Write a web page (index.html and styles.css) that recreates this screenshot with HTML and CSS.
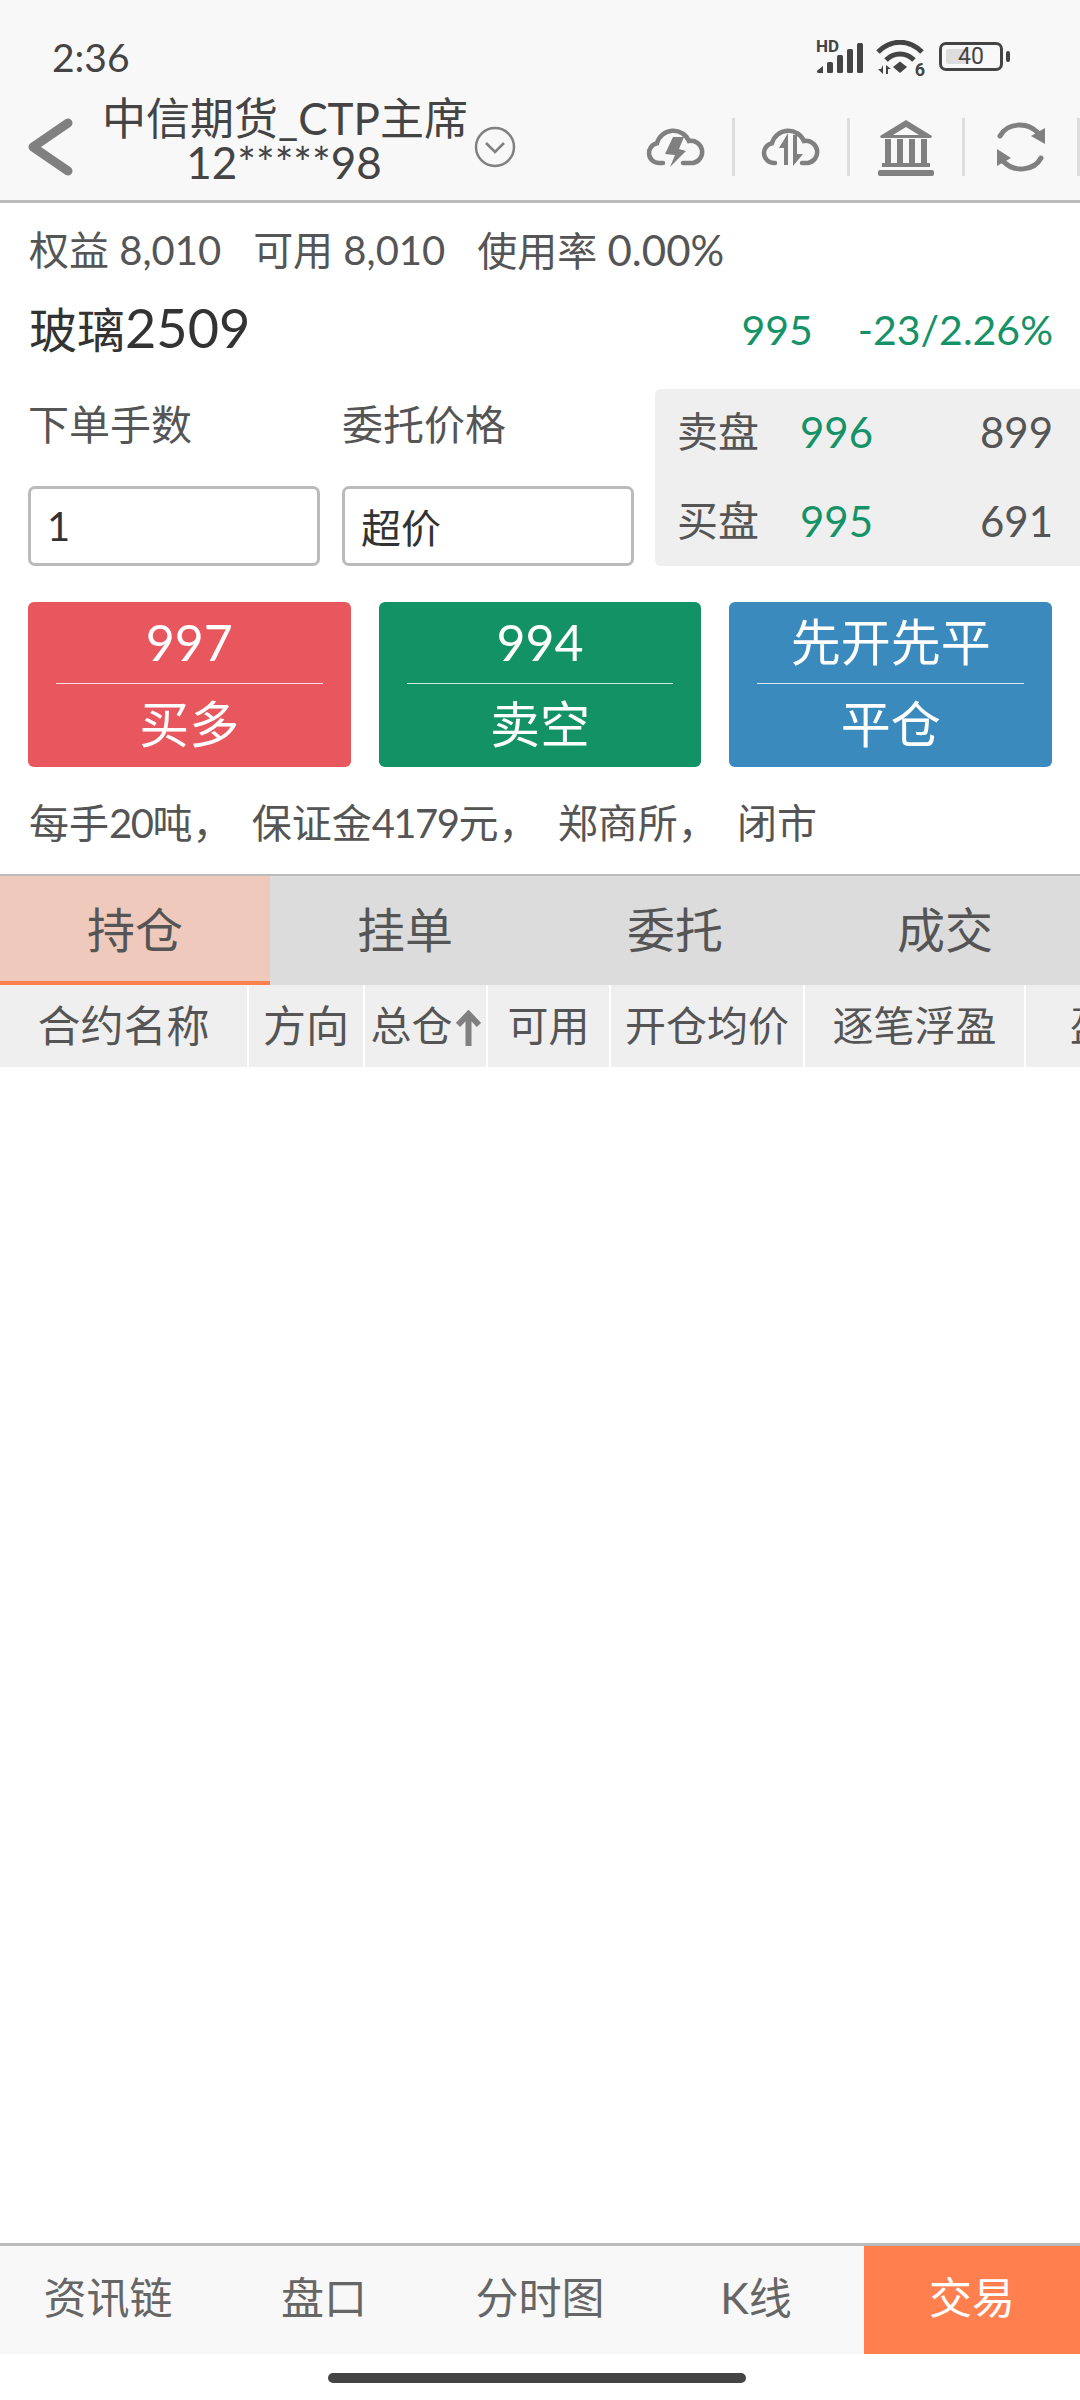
FILE: index.html
```html
<!DOCTYPE html>
<html>
<head>
    <title>交易</title>
    <link rel="stylesheet" href="styles.css">
</head>
<body>
    <div class="top-bar">
        <div class="status-bar">
            <span class="clock">2:36</span>
            <div class="status-icons">
                <!-- signal bars -->
                <div class="signal">
                    <span class="hd">HD</span>
                    <svg width="49" height="32" viewBox="0 0 49 32">
                        <path d="M3 31a1.500 1.500 0 0 1-1-3l5-4v7z" fill="#444"/>
                        <rect x="11" y="20" width="6" height="11" rx="1.500" fill="#444"/>
                        <rect x="21" y="13" width="6" height="18" rx="1.500" fill="#444"/>
                        <rect x="31" y="7" width="6" height="24" rx="1.500" fill="#444"/>
                        <rect x="41" y="1" width="6" height="30" rx="1.500" fill="#444"/>
                    </svg>
                </div>
                <!-- wifi -->
                <div class="wifi">
                    <svg width="49" height="36" viewBox="0 0 49 36">
                        <path d="M2 12C15-1 33-1 46 12" fill="none" stroke="#444" stroke-width="5"/>
                        <path d="M10 20C18 12 30 12 38 20" fill="none" stroke="#444" stroke-width="5"/>
                        <path d="M17 27L24 21.500 31 27 24 33z" fill="#444"/>
                        <path d="M7 25v9L2 29h3zM10 25v9h2v-5h3z" fill="#444"/>
                    </svg>
                    <span class="wifi-six">6</span>
                </div>
                <div class="battery">
                    <div class="battery-body">
                        <div class="battery-level"></div>
                        <span class="battery-num">40</span>
                    </div>
                    <div class="battery-cap"></div>
                </div>
            </div>
        </div>
        <div class="nav-bar">
            <svg class="back" width="46" height="58" viewBox="0 0 46 58">
                <path d="M41 5L6 29l35 24" fill="none" stroke="#808080" stroke-width="9" stroke-linecap="round" stroke-linejoin="round"/>
            </svg>
            <div class="account">
                <div>中信期货_CTP主席</div>
                <div>12*****98</div>
            </div>
            <svg class="account-more" width="42" height="42" viewBox="0 0 42 42">
                <circle cx="21" cy="21" r="19" fill="none" stroke="#808080" stroke-width="2.500"/>
                <path d="M12 17l9 9 9-9" fill="none" stroke="#808080" stroke-width="2.500"/>
            </svg>
            <div class="nav-tools">
                <div class="tool">
                    <svg width="60" height="48" viewBox="0 0 60 48">
                        <path d="M17 40H13a10 10 0 0 1-2-19.800A17 17 0 0 1 43 18a11 11 0 0 1 4 22H37" fill="none" stroke="#808080" stroke-width="4.500" stroke-linecap="round"/>
                        <path d="M27 14h11l-5 12 7 2-16 16 5-12-10-1z" fill="#808080"/>
                    </svg>
                </div>
                <div class="tool">
                    <svg width="60" height="48" viewBox="0 0 60 48">
                        <path d="M14 40H13a10 10 0 0 1-2-19.800A17 17 0 0 1 43 18a11 11 0 0 1 4 22H41" fill="none" stroke="#808080" stroke-width="4.500" stroke-linecap="round"/>
                        <path d="M27 10v32h-4V25h-5z" fill="#808080"/>
                        <path d="M32 12h4v19h6l-10 12z" fill="#808080"/>
                    </svg>
                </div>
                <div class="tool">
                    <svg width="56" height="58" viewBox="0 0 56 58">
                        <path d="M28 2L2 18l1 2h50l1-2zM28 9l-13 8h26z" fill="#808080" fill-rule="evenodd"/>
                        <rect x="7" y="21" width="6" height="25" fill="#808080"/>
                        <rect x="19" y="21" width="6" height="25" fill="#808080"/>
                        <rect x="31" y="21" width="6" height="25" fill="#808080"/>
                        <rect x="43" y="21" width="6" height="25" fill="#808080"/>
                        <rect x="4" y="45" width="48" height="4" fill="#808080"/>
                        <rect x="0" y="52" width="56" height="6" rx="2" fill="#808080"/>
                    </svg>
                </div>
                <div class="tool">
                    <svg width="52" height="52" viewBox="0 0 52 52">
                        <path d="M5 15C12 2 32 0 43 12" fill="none" stroke="#808080" stroke-width="5" stroke-linecap="round"/>
                        <path d="M36 15l14-8v16z" fill="#808080"/>
                        <path d="M46 37C39 50 19 52 8 40" fill="none" stroke="#808080" stroke-width="5" stroke-linecap="round"/>
                        <path d="M16 37L2 45V28z" fill="#808080"/>
                    </svg>
                </div>
            </div>
        </div>
    </div>

    <div class="summary">
        <span>权益 8,010</span>
        <span>可用 8,010</span>
        <span>使用率 <span class="rate">0.00%</span></span>
    </div>

    <div class="contract">
        <span class="contract-name">玻璃<span class="contract-code">2509</span></span>
        <div class="contract-quote">
            <span>995</span>
            <span>-23/2.26%</span>
        </div>
    </div>

    <div class="order">
        <div class="order-fields">
            <div class="field">
                <label for="lots">下单手数</label>
                <input id="lots" type="text" value="1">
            </div>
            <div class="field">
                <label for="price">委托价格</label>
                <input id="price" type="text" value="超价">
            </div>
        </div>
        <div class="depth">
            <div class="depth-row"><span>卖盘</span><span class="depth-price">996</span><span class="depth-qty">899</span></div>
            <div class="depth-row"><span>买盘</span><span class="depth-price">995</span><span class="depth-qty">691</span></div>
        </div>
    </div>

    <div class="actions">
        <div class="action buy"><div class="action-top">997</div><div class="action-bottom">买多</div></div>
        <div class="action sell"><div class="action-top">994</div><div class="action-bottom">卖空</div></div>
        <div class="action close"><div class="action-top">先开先平</div><div class="action-bottom">平仓</div></div>
    </div>

    <p class="note">每手<span class="note-num">20</span>吨， 保证金<span class="note-num">4179</span>元， 郑商所， 闭市</p>

    <div class="tabs">
        <div class="tab active">持仓</div>
        <div class="tab">挂单</div>
        <div class="tab">委托</div>
        <div class="tab">成交</div>
    </div>

    <div class="table-head">
        <div class="col col-name">合约名称</div>
        <div class="col col-side">方向</div>
        <div class="col col-total">总仓<svg class="sort" width="25" height="37" viewBox="0 0 25 37"><path d="M12.500 4V36M2 15L12.500 4 23 15" fill="none" stroke="#808080" stroke-width="6"/></svg></div>
        <div class="col col-free">可用</div>
        <div class="col col-avg">开仓均价</div>
        <div class="col col-float">逐笔浮盈</div>
        <div class="col col-more">盈亏</div>
    </div>

    <div class="positions"></div>

    <div class="bottom-nav">
        <div class="bottom-item">资讯链</div>
        <div class="bottom-item">盘口</div>
        <div class="bottom-item">分时图</div>
        <div class="bottom-item">K线</div>
        <div class="bottom-item selected">交易</div>
    </div>

    <div class="home-area"><div class="home-pill"></div></div>
</body>
</html>
```

FILE: styles.css
```css
* {
    box-sizing: border-box;
}
html, body {
    height: 100%;
}
body {
    margin: 0;
    height: 2400px;
    width: 1080px;
    overflow: hidden;
    display: flex;
    flex-direction: column;
    background-color: #ffffff;
    color: #555555;
    font-family: "Lato", "Noto Sans CJK SC", sans-serif;
}

/* top bar */
.top-bar {
    height: 203px;
    background-color: #f8f8f8;
    border-bottom: 3px solid #bbbbbb;
    flex-shrink: 0;
}
.status-bar {
    height: 94px;
    padding: 32px 70px 0 52px;
    display: flex;
    justify-content: space-between;
    align-items: flex-start;
}
.clock {
    font-size: 39px;
    line-height: 50px;
    color: #444444;
}
.status-icons {
    display: flex;
    gap: 11px;
    align-items: flex-start;
    margin-top: 8px;
}
.signal {
    position: relative;
    width: 49px;
    height: 34px;
    padding-top: 2px;
}
.hd {
    position: absolute;
    left: 0;
    top: -2px;
    font-family: "Roboto", sans-serif;
    font-size: 17px;
    font-weight: 700;
    line-height: 16px;
    color: #444444;
}
.wifi {
    position: relative;
    width: 49px;
    height: 36px;
}
.wifi-six {
    position: absolute;
    right: 0;
    bottom: -2px;
    font-family: "Roboto", sans-serif;
    font-size: 18px;
    font-weight: 700;
    line-height: 17px;
    color: #444444;
}
.battery {
    display: flex;
    align-items: center;
    gap: 3px;
    margin-left: 3px;
    margin-top: 2px;
}
.battery-body {
    position: relative;
    width: 64px;
    height: 29px;
    border: 3px solid #444444;
    border-radius: 7px;
    display: flex;
    align-items: center;
    justify-content: center;
}
.battery-level {
    position: absolute;
    left: 4px;
    top: 4px;
    bottom: 4px;
    width: 20px;
    background-color: #dddddd;
    border-radius: 2px;
}
.battery-num {
    position: relative;
    font-family: "Roboto", sans-serif;
    font-size: 23px;
    line-height: 24px;
    color: #444444;
}
.battery-cap {
    width: 4px;
    height: 11px;
    background-color: #444444;
    border-radius: 2px;
}
.nav-bar {
    height: 106px;
    display: flex;
    align-items: center;
    padding-left: 27px;
}
.back {
    flex-shrink: 0;
}
.account {
    width: 364px;
    margin-left: 29px;
    margin-top: -14px;
    text-align: center;
    font-size: 44px;
    line-height: 44px;
    color: #444444;
    white-space: nowrap;
}
.account-more {
    margin-left: 8px;
}
.nav-tools {
    margin-left: auto;
    display: flex;
}
.tool {
    width: 115px;
    height: 58px;
    border-right: 3px solid #dddddd;
    display: flex;
    align-items: center;
    justify-content: center;
}

/* account summary */
.summary {
    display: flex;
    gap: 32px;
    padding: 0 29px;
    margin-top: 22px;
    height: 50px;
    font-size: 40px;
    line-height: 50px;
    white-space: nowrap;
}
.rate {
    font-size: 42px;
}
.contract {
    display: flex;
    justify-content: space-between;
    align-items: center;
    padding: 0 27px 0 29px;
    margin-top: 24px;
    height: 60px;
}
.contract-name {
    font-size: 48px;
    color: #333333;
    margin-top: -5px;
}
.contract-code {
    font-size: 54px;
}
.contract-quote {
    display: flex;
    gap: 45px;
    font-size: 41px;
    color: #169267;
}

/* order form and depth */
.order {
    display: flex;
    justify-content: space-between;
    margin-top: 30px;
    padding-left: 28px;
}
.order-fields {
    display: flex;
    gap: 22px;
}
.field {
    width: 292px;
    display: flex;
    flex-direction: column;
}
.field label {
    font-size: 41px;
    line-height: 50px;
    height: 86px;
    margin-top: 11px;
}
.field input {
    width: 292px;
    height: 80px;
    border: 3px solid #bbbbbb;
    border-radius: 7px;
    padding: 0 16px;
    font-family: inherit;
    font-size: 40px;
    color: #333333;
    background-color: #ffffff;
}
.depth {
    width: 425px;
    height: 177px;
    background-color: #efefef;
    border-radius: 6px 0 0 6px;
    padding: 0 27px 3px 22px;
    display: flex;
    flex-direction: column;
    justify-content: center;
    gap: 39px;
}
.depth-row {
    display: flex;
    align-items: center;
    height: 50px;
    font-size: 41px;
    line-height: 50px;
}
.depth-price {
    margin-left: 41px;
    color: #169267;
    font-size: 42px;
}
.depth-qty {
    margin-left: auto;
    font-size: 42px;
}

/* buy, sell, close buttons */
.actions {
    display: flex;
    gap: 28px;
    padding: 0 28px;
    margin-top: 36px;
}
.action {
    flex: 1;
    height: 165px;
    border-radius: 6px;
    color: #ffffff;
    font-size: 50px;
    text-align: center;
    padding: 0 28px;
}
.buy {
    background-color: #e8565e;
}
.sell {
    background-color: #129265;
}
.close {
    background-color: #3a8abd;
}
.action-top {
    height: 82px;
    line-height: 81px;
    border-bottom: 1px solid rgba(255, 255, 255, 0.8);
}
.action-bottom {
    line-height: 80px;
}

.note {
    margin: 31px 0 0 0;
    padding-left: 29px;
    height: 50px;
    font-size: 40px;
    line-height: 50px;
    white-space: pre;
    word-spacing: 9px;
}
.note-num {
    letter-spacing: -1.500px;
}

/* position tabs */
.tabs {
    display: flex;
    margin-top: 26px;
    height: 111px;
    background-color: #dcdcdc;
    border-top: 2px solid #bbbbbb;
}
.tab {
    width: 270px;
    text-align: center;
    font-size: 48px;
    line-height: 107px;
}
.tab.active {
    background-color: #eec9bc;
    border-bottom: 4px solid #ff7f4e;
}

/* table header */
.table-head {
    display: flex;
    height: 82px;
    background-color: #efefef;
    font-size: 41px;
    line-height: 82px;
    white-space: nowrap;
    overflow: hidden;
    flex-shrink: 0;
}
.col {
    text-align: center;
    border-right: 2px solid #ffffff;
    flex-shrink: 0;
}
.col-name {
    width: 249px;
    font-size: 43px;
}
.col-side {
    width: 116px;
    font-size: 43px;
}
.col-total { width: 123px; }
.col-free { width: 123px; }
.col-avg { width: 194px; }
.col-float { width: 221px; }
.col-more {
    width: 170px;
    border-right: 0;
}
.sort {
    margin-left: 3px;
    vertical-align: -6px;
}
.positions {
    flex: 1;
}

/* bottom nav */
.bottom-nav {
    display: flex;
    height: 111px;
    background-color: #f8f8f8;
    border-top: 3px solid #bbbbbb;
    flex-shrink: 0;
}
.bottom-item {
    width: 216px;
    text-align: center;
    font-size: 43px;
    line-height: 103px;
    color: #666666;
}
.bottom-item.selected {
    background-color: #ff7f4e;
    color: #ffffff;
}
.home-area {
    height: 46px;
    padding: 19px 6px 0 0;
    flex-shrink: 0;
    display: flex;
    justify-content: center;
    background-color: #ffffff;
}
.home-pill {
    width: 418px;
    height: 10px;
    border-radius: 5px;
    background-color: #444444;
}
```
